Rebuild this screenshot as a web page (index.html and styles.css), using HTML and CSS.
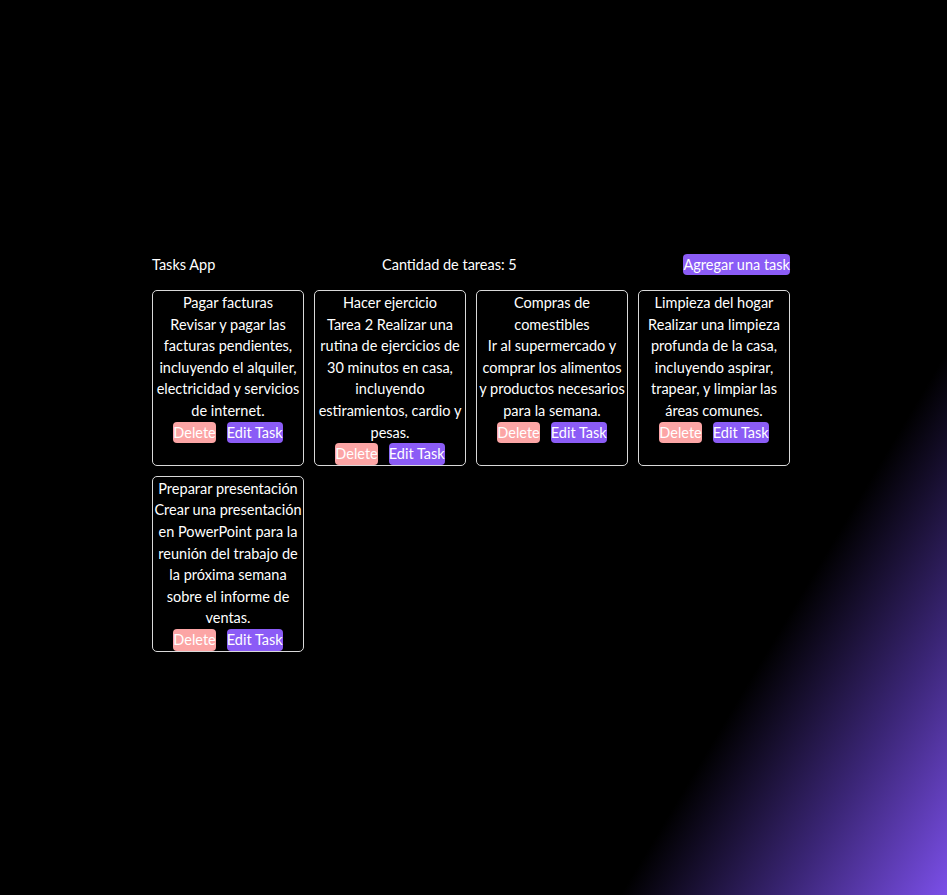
FILE: index.html
```html
<!DOCTYPE html>
<html lang="es">
<head>
<meta charset="utf-8">
<title>Tasks App</title>
<link rel="stylesheet" href="styles.css">
</head>
<body>
<main class="app">
  <header class="header">
    <span class="brand">Tasks App</span>
    <span class="count">Cantidad de tareas: 5</span>
    <button class="btn btn-add">Agregar una task</button>
  </header>
  <section class="grid">
    <article class="card">
      <div class="title">Pagar facturas</div>
      <div class="desc">Revisar y pagar las facturas pendientes, incluyendo el alquiler, electricidad y servicios de internet.</div>
      <div class="actions"><button class="btn btn-del">Delete</button><button class="btn btn-edit">Edit Task</button></div>
    </article>
    <article class="card">
      <div class="title">Hacer ejercicio</div>
      <div class="desc">Tarea 2 Realizar una rutina de ejercicios de 30 minutos en casa, incluyendo estiramientos, cardio y pesas.</div>
      <div class="actions"><button class="btn btn-del">Delete</button><button class="btn btn-edit">Edit Task</button></div>
    </article>
    <article class="card">
      <div class="title">Compras de comestibles</div>
      <div class="desc">Ir al supermercado y comprar los alimentos y&nbsp;productos necesarios para la semana.</div>
      <div class="actions"><button class="btn btn-del">Delete</button><button class="btn btn-edit">Edit Task</button></div>
    </article>
    <article class="card">
      <div class="title">Limpieza del hogar</div>
      <div class="desc">Realizar una limpieza profunda de la casa, incluyendo aspirar, trapear, y limpiar las áreas comunes.</div>
      <div class="actions"><button class="btn btn-del">Delete</button><button class="btn btn-edit">Edit Task</button></div>
    </article>
    <article class="card">
      <div class="title">Preparar presentación</div>
      <div class="desc">Crear una presentación en PowerPoint para la reunión del trabajo de la próxima semana sobre el informe de ventas.</div>
      <div class="actions"><button class="btn btn-del">Delete</button><button class="btn btn-edit">Edit Task</button></div>
    </article>
  </section>
</main>
</body>
</html>
```
FILE: styles.css
```css
html, body {
  margin: 0;
  height: 100%;
}
body {
  background: linear-gradient(121deg, #000 78%, #3a2575 89%, #7b4fe8 100%);
  color: #fff;
  font-family: Lato, "Noto Sans", sans-serif;
  font-size: 14.5px;
  line-height: 21.6px;
}
.app {
  width: 638px;
  margin-left: 152px;
  padding-top: 254px;
}
.header {
  display: flex;
  justify-content: space-between;
  align-items: center;
  height: 21px;
  margin-bottom: 15px;
}
.btn {
  font: inherit;
  line-height: 21.6px;
  color: #fff;
  border: none;
  padding: 0;
  border-radius: 4px;
  cursor: pointer;
}
.btn-add {
  background: #8b5cf6;
}
.grid {
  display: grid;
  grid-template-columns: repeat(4, 1fr);
  gap: 10px 10px;
}
.card {
  border: 1px solid #d9d9d9;
  border-radius: 5px;
  text-align: center;
  min-height: 173px;
  padding-top: 1px;
  box-sizing: border-box;
}
.actions {
  display: flex;
  justify-content: center;
  gap: 11px;
}
.btn-del {
  background: #fca5a5;
}
.btn-edit {
  background: #8b5cf6;
}
```
